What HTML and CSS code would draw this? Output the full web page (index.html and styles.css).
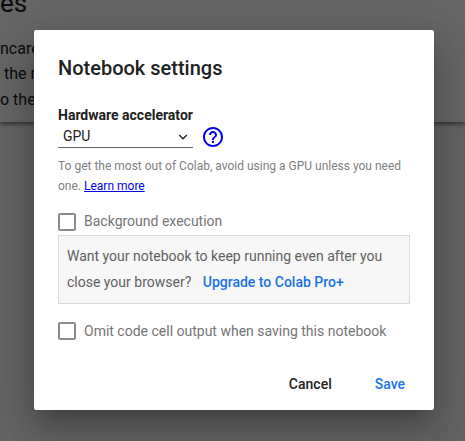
FILE: index.html
```html
<!DOCTYPE html>
<html lang="en">
<head>
<meta charset="utf-8">
<title>Notebook settings</title>
<link rel="stylesheet" href="styles.css">
</head>
<body>
<main class="page">
  <div class="page-title">es</div>
  <div class="page-line page-line-first">ncare</div>
  <div class="page-line page-line-indent">the n</div>
  <div class="page-line">o the</div>
</main>
<div class="backdrop">
  <section class="dialog" role="dialog">
    <h2 class="title">Notebook settings</h2>
    <div class="label">Hardware accelerator</div>
    <div class="accelerator">
      <div class="select"><span>GPU</span>
        <svg class="chevron" width="10" height="6" viewBox="0 0 10 6"><path d="M1.200 1 5 4.800 8.800 1"/></svg>
      </div>
      <svg class="help" width="24" height="24" viewBox="0 0 24 24"><path d="M11 18h2v-2h-2v2zm1-16C6.480 2 2 6.480 2 12s4.480 10 10 10 10-4.480 10-10S17.520 2 12 2zm0 18c-4.410 0-8-3.590-8-8s3.590-8 8-8 8 3.590 8 8-3.590 8-8 8zm0-14c-2.210 0-4 1.790-4 4h2c0-1.100.9-2 2-2s2 .9 2 2c0 2-3 1.750-3 5h2c0-2.250 3-2.500 3-5 0-2.210-1.790-4-4-4z"/></svg>
    </div>
    <p class="hint">To get the most out of Colab, avoid using a GPU unless you need<br>one. <a href="#">Learn more</a></p>
    <div class="option"><span class="box"></span><span>Background execution</span></div>
    <div class="promo">Want your notebook to keep running even after you<br>close your browser?<a class="upgrade" href="#">Upgrade to Colab Pro+</a></div>
    <div class="option option-omit"><span class="box"></span><span>Omit code cell output when saving this notebook</span></div>
    <div class="actions"><button class="btn">Cancel</button><button class="btn btn-save">Save</button></div>
  </section>
</div>
</body>
</html>
```
FILE: styles.css
```css
* { box-sizing: border-box; }
body {
  margin: 0;
  height: 441px;
  overflow: hidden;
  background: #f9f9f9;
  font-family: Roboto, "Liberation Sans", sans-serif;
}
.page {
  height: 122px;
  overflow: visible;
  background: #fff;
  color: #212121;
  box-shadow: 0 2px 4px rgba(0, 0, 0, .5);
}
.page-title { height: 35px; font-size: 26px; line-height: 6px; }
.page-line { height: 26px; font-size: 16px; line-height: 26px; }
.page-line-first { line-height: 27px; }
.page-line-indent { padding-left: 4px; }
.backdrop {
  position: absolute;
  inset: 0;
  padding: 30px 31px 31px 34px;
  background: rgba(0, 0, 0, .6);
}
.dialog {
  width: 400px;
  height: 380px;
  padding: 24px 24px 0;
  border-radius: 2px;
  background: #fff;
  color: #212121;
  box-shadow: 0 11px 15px -7px rgba(0, 0, 0, .2), 0 24px 38px 3px rgba(0, 0, 0, .14), 0 9px 46px 8px rgba(0, 0, 0, .12);
}
.title { margin: 0; font-size: 20px; font-weight: 500; line-height: 28px; }
.label { margin-top: 24px; font-size: 14px; font-weight: 700; line-height: 18px; }
.accelerator { display: flex; height: 26px; }
.select {
  display: flex;
  align-items: center;
  justify-content: space-between;
  width: 135px;
  height: 24px;
  padding: 0 5px;
  border-bottom: 1px solid #616161;
  font-size: 14px;
}
.chevron { margin-top: 2px; fill: none; stroke: #212121; stroke-width: 1.400; }
.help { margin: 1px 0 0 8px; fill: #0000ee; }
.hint { margin: 6px 0 0; color: #808080; font-size: 12px; line-height: 20px; white-space: nowrap; }
.hint a { color: #0000ee; }
.option { display: flex; gap: 8px; height: 22px; margin-top: 15px; color: #757575; font-size: 14px; line-height: 20px; white-space: nowrap; }
.box { width: 18px; height: 18px; margin-top: 2px; border: 2px solid #8c8c8c; border-radius: 2px; }
.promo {
  width: 352px;
  height: 69px;
  margin-top: 2px;
  padding: 7px 8px;
  border: 1px solid #dadada;
  background: #f7f7f7;
  color: #616161;
  font-size: 14px;
  line-height: 26px;
  white-space: nowrap;
}
.upgrade { margin-left: 11.500px; color: #1a73e8; font-weight: 500; text-decoration: none; }
.option-omit { margin-top: 16px; line-height: 22px; }
.actions { display: flex; justify-content: flex-end; gap: 43px; margin: 32px 5px 0 0; }
.btn { padding: 0; border: 0; background: none; color: #212121; font: 500 14px/20px Roboto, sans-serif; }
.btn-save { color: #1a73e8; }
```
